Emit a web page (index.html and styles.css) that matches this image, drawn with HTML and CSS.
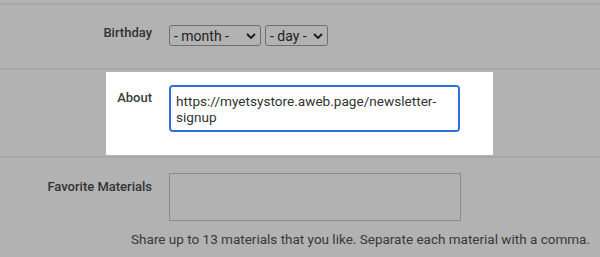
FILE: index.html
```html
<!DOCTYPE html>
<html lang="en">
<head>
    <meta charset="UTF-8">
    <meta name="viewport" content="width=device-width, initial-scale=1.0">
    <title>Profile settings</title>
    <link rel="stylesheet" href="styles.css">
</head>
<body>
    <div class="profile-form">
        <!-- Birthday -->
        <div class="form-row birthday-row">
            <label class="row-label" for="month">Birthday</label>
            <div class="row-controls">
                <span class="select-wrap month">
                    <select id="month" name="month">
                        <option>- month -</option>
                    </select>
                    <svg class="chevron" viewBox="0 0 10 6" width="10" height="6"><path d="M1 1 L5 5 L9 1" fill="none" stroke="#1a1a1a" stroke-width="1.8"/></svg>
                </span>
                <span class="select-wrap day">
                    <select id="day" name="day">
                        <option>- day -</option>
                    </select>
                    <svg class="chevron" viewBox="0 0 10 6" width="10" height="6"><path d="M1 1 L5 5 L9 1" fill="none" stroke="#1a1a1a" stroke-width="1.8"/></svg>
                </span>
            </div>
        </div>

        <!-- About (highlighted) -->
        <div class="form-row about-row">
            <div class="spotlight">
                <label class="row-label" for="about">About</label>
                <textarea id="about" name="about" class="about-input">https://myetsystore.aweb.page/newsletter-signup</textarea>
            </div>
        </div>

        <!-- Favorite materials -->
        <div class="form-row materials-row">
            <div class="materials-line">
                <label class="row-label" for="materials">Favorite Materials</label>
                <textarea id="materials" name="materials" class="materials-input"></textarea>
            </div>
            <p class="help-text">Share up to 13 materials that you like. Separate each material with a comma.</p>
        </div>
    </div>
</body>
</html>
```

FILE: styles.css
```css
body {
    margin: 0;
    padding: 0;
    background-color: #b2b2b2; /* dimmed page behind the spotlight */
    font-family: Roboto, "Liberation Sans", sans-serif;
    color: #2e2e2e;
    overflow: hidden;
}

.profile-form {
    padding-top: 3px;
}

.form-row {
    border-top: 2px solid #a7a7a7;
}

.row-label {
    display: block;
    width: 169px;
    padding-right: 17px;
    box-sizing: border-box;
    text-align: right;
    font-size: 13px;
    font-weight: 500;
    line-height: 16px;
    color: #333;
    flex-shrink: 0;
}

/* Birthday */
.birthday-row {
    display: flex;
    align-items: flex-start;
    height: 65px;
    box-sizing: border-box;
    padding-top: 20px;
}

.row-controls {
    display: flex;
    gap: 4px;
}

.select-wrap {
    position: relative;
    display: block;
}

.select-wrap select {
    appearance: none;
    -webkit-appearance: none;
    display: block;
    height: 21px;
    margin: 0;
    padding: 0 0 0 4px;
    border: 1px solid #6f6f6f;
    border-radius: 3px;
    background-color: #b2b2b2;
    color: #1e1e1e;
    font-family: inherit;
    font-size: 14px;
}

.select-wrap.month select {
    width: 92px;
}

.select-wrap.day select {
    width: 63px;
}

.chevron {
    position: absolute;
    right: 5px;
    top: 8px;
    pointer-events: none;
}

/* About */
.about-row {
    height: 88px;
    box-sizing: border-box;
    padding-top: 2px;
}

.spotlight {
    display: flex;
    align-items: flex-start;
    margin-left: 106px;
    width: 387px;
    height: 83px;
    padding-top: 13px;
    box-sizing: border-box;
    background-color: #ffffff;
}

.spotlight .row-label {
    width: 63px;
    color: #3b3b3b;
    margin-top: 5px;
}

.about-input {
    display: block;
    width: 291px;
    height: 47px;
    margin: 0;
    padding: 6px 5px;
    box-sizing: border-box;
    border: 2px solid #2f6fde;
    border-radius: 4px;
    font-family: inherit;
    font-size: 13.6px;
    line-height: 16px;
    color: #333;
    resize: none;
    outline: none;
}

/* Favorite materials */
.materials-row {
    padding-top: 15px;
}

.materials-line {
    display: flex;
    align-items: flex-start;
}

.materials-line .row-label {
    margin-top: 6px;
}

.materials-input {
    display: block;
    width: 292px;
    height: 48px;
    margin: 0;
    border: 1px solid #8c8c8c;
    background-color: #b2b2b2;
    box-sizing: border-box;
    resize: none;
}

.help-text {
    margin: 10px 10px 0 0;
    text-align: right;
    font-size: 13.5px;
    line-height: 16px;
    color: #383838;
}
```
